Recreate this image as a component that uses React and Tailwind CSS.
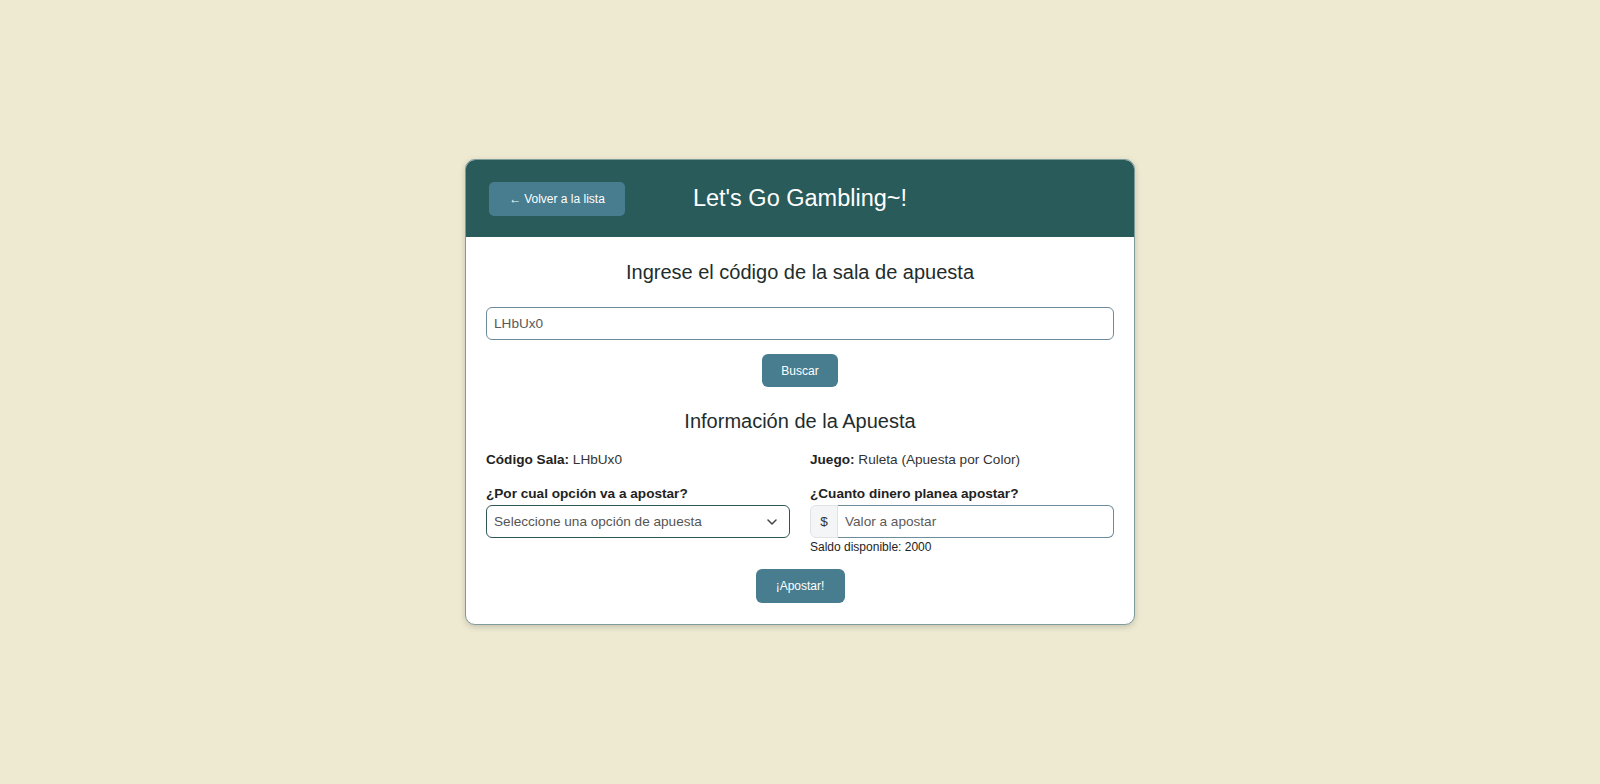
import { useState } from 'react';

export default function App() {
  const [codigo, setCodigo] = useState('LHbUx0');
  const [opcion, setOpcion] = useState('');
  const [monto, setMonto] = useState('');

  return (
    <div className="min-h-screen bg-[#eeead2] flex items-center justify-center font-['Liberation_Sans',Arial,sans-serif]">
      <div className="w-[670px] bg-white rounded-[10px] border border-[#7f9c9c] shadow-[0_2px_6px_rgba(0,0,0,0.18)] overflow-hidden">
        {/* Header */}
        <div className="h-[77px] bg-[#285b5a] px-[23px] grid grid-cols-[1fr_auto_1fr] items-center">
          <div>
            <button className="w-[136px] h-[34px] rounded-[5px] bg-[#477d8f] text-white text-[12px] flex items-center justify-center gap-[3px]">
              <span>←</span>
              <span>Volver a la lista</span>
            </button>
          </div>
          <h1 className="text-white text-[23.5px] leading-none">Let's Go Gambling~!</h1>
          <div />
        </div>

        {/* Body */}
        <div className="px-[20px] pt-[23px] pb-[21px] text-[#222]">
          <h2 className="text-center text-[20px] leading-[24px] text-[#1f2d2d]">
            Ingrese el código de la sala de apuesta
          </h2>
          <input
            type="text"
            value={codigo}
            onChange={(e) => setCodigo(e.target.value)}
            className="mt-[23px] w-full h-[33px] px-[7px] rounded-[6px] border border-[#6d8c9b] text-[13.6px] text-[#5a5a5a] outline-none"
          />
          <div className="flex justify-center mt-[14px]">
            <button className="w-[76px] h-[33px] rounded-[6px] bg-[#477d8f] text-white text-[12px]">Buscar</button>
          </div>

          <h2 className="mt-[22px] text-center text-[20px] leading-[24px] text-[#1f2d2d]">
            Información de la Apuesta
          </h2>

          <div className="mt-[17px] grid grid-cols-2 gap-x-[20px] text-[13.6px] leading-[20px] text-[#333]">
            <p>
              <span className="font-bold text-[#222]">Código Sala:</span> LHbUx0
            </p>
            <p>
              <span className="font-bold text-[#222]">Juego:</span> Ruleta (Apuesta por Color)
            </p>

            <div className="mt-[14px]">
              <label className="block font-bold text-[#222] leading-[20px]">¿Por cual opción va a apostar?</label>
              <div className="relative mt-[1px]">
                <select
                  value={opcion}
                  onChange={(e) => setOpcion(e.target.value)}
                  className="appearance-none w-full h-[33px] pl-[7px] pr-8 rounded-[6px] border border-[#2f5757] bg-white text-[13.6px] text-[#555] outline-none"
                >
                  <option value="">Seleccione una opción de apuesta</option>
                  <option value="rojo">Rojo</option>
                  <option value="negro">Negro</option>
                </select>
                <svg
                  className="absolute right-[13px] top-1/2 -translate-y-1/2 pointer-events-none"
                  width="10"
                  height="7"
                  viewBox="0 0 10 7"
                  fill="none"
                  stroke="#444"
                  strokeWidth="1.5"
                  strokeLinecap="round"
                  strokeLinejoin="round"
                >
                  <path d="M1 1.5l4 4 4-4" />
                </svg>
              </div>
            </div>

            <div className="mt-[14px]">
              <label className="block font-bold text-[#222] leading-[20px]">¿Cuanto dinero planea apostar?</label>
              <div className="mt-[1px] flex h-[33px]">
                <span className="w-[28px] flex items-center justify-center bg-[#f4f5f6] border border-[#dfe3e6] rounded-l-[6px] text-[13.6px] text-[#333]">
                  $
                </span>
                <input
                  type="number"
                  placeholder="Valor a apostar"
                  value={monto}
                  onChange={(e) => setMonto(e.target.value)}
                  className="flex-1 min-w-0 px-[7px] rounded-r-[6px] border border-l-0 border-[#6d8c9b] text-[13.6px] text-[#555] placeholder:text-[#5a5a5a] outline-none"
                />
              </div>
              <p className="text-[12px] leading-[16px] mt-[1px] text-[#222]">Saldo disponible: 2000</p>
            </div>
          </div>

          <div className="flex justify-center mt-[14px]">
            <button className="w-[89px] h-[34px] rounded-[6px] bg-[#477d8f] text-white text-[12px]">¡Apostar!</button>
          </div>
        </div>
      </div>
    </div>
  );
}
